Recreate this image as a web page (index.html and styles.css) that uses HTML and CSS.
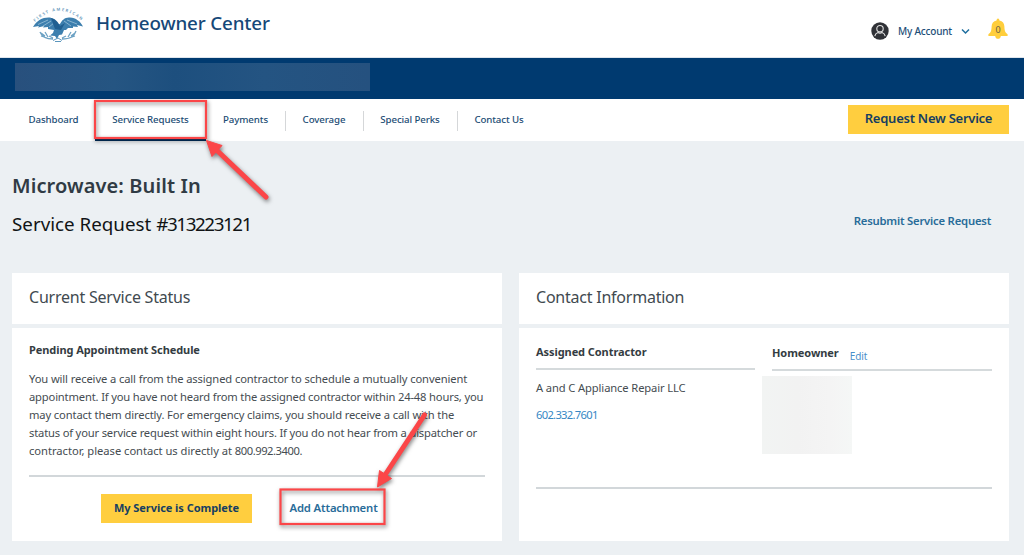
FILE: index.html
```html
<!DOCTYPE html>
<html lang="en">
<head>
<meta charset="utf-8">
<title>Homeowner Center</title>
<link rel="stylesheet" href="styles.css">
</head>
<body>
<header class="top">
  <svg class="logo" width="54" height="38" viewBox="0 0 54 38" aria-label="First American">
    <defs><path id="arc" d="M4 16Q27-6 51 15"/></defs>
    <text class="logo-text"><textPath href="#arc" textLength="52">FIRST AMERICAN</textPath></text>
    <path d="M2 21C6 14 12 11 19 11.500C23 12.500 25 15 26.500 18.500L29 18C31 14 34 11 39 11.500C45 12 49 15 52 20.500L46 19L47 21L42 20.500L42 22L37 22L35 24L33 24L31 28.500L28 29L26 33L24 30L19 29.500L22 27L23 24L17 23L17 21L12 21.500L13 20L7 21.500L8 20Z" fill="#3d7fae"/>
    <path d="M7 18.500L17 14M12 20L20 15M18 21L23 17M46 18L36 14M40 20L33 15" stroke="#a9cbdf" stroke-width=".7" fill="none"/>
    <path d="M20 12C25 13 27 16 29 20L34 17L30 24L24 23Z" fill="#205f91"/>
    <path d="M9 26C11 31 15 33 22 33M45 25C43 31 39 33 31 33M10 27l4 3M14 26l3 5M10 30l6 2M44 27l-4 3M40 26l-3 5M44 30l-6 2M18 30l4 2M35 30l-4 2" fill="none" stroke="#6da2c4" stroke-width="1.300"/>
    <path d="M22 34.500L27 32L31 34.500M24 35.500h6" fill="none" stroke="#5b96bd" stroke-width="1"/>
  </svg>
  <div class="brand">Homeowner Center</div>
  <div class="account">
    <svg width="18" height="18" viewBox="0 0 18 18"><circle cx="9" cy="9" r="8.700" fill="#303237"/><circle cx="9" cy="6.700" r="3.200" fill="none" stroke="#e4e4e4" stroke-width="1.100"/><path d="M3.800 14.200C4.300 11.800 5.500 10.900 7 10.500C8.300 11.300 9.700 11.300 11 10.500C12.500 10.900 13.700 11.800 14.200 14.200" fill="none" stroke="#e4e4e4" stroke-width="1.100"/></svg>
    <span class="account-name">My Account</span>
    <svg class="chev" width="9" height="7" viewBox="0 0 9 7"><path d="M1 1.500L4.500 5L8 1.500" fill="none" stroke="#1f6f9f" stroke-width="1.500"/></svg>
  </div>
  <div class="bell">
    <svg width="20" height="22" viewBox="0 0 20 22"><path d="M10 .5C11 .5 11.400 1.500 11.400 2.500C14.800 3.100 16.200 5.200 16.400 8.500C16.500 13 17.300 14.500 19.600 16.200V18H.4V16.200C2.700 14.500 3.500 13 3.600 8.500C3.800 5.200 5.200 3.100 8.600 2.500C8.600 1.500 9 .5 10 .5Z" fill="#ffce3c"/><path d="M7.200 18h5.600C12.500 21.800 7.500 21.800 7.200 18Z" fill="#ffce3c"/></svg>
    <span class="count">0</span>
  </div>
</header>
<div class="bar"><div class="redacted"></div></div>
<nav class="nav">
  <a class="n1">Dashboard</a><a class="n2">Service Requests</a><a class="n3">Payments</a><a class="n4">Coverage</a><a class="n5">Special Perks</a><a class="n6">Contact Us</a>
  <button class="request">Request New Service</button>
</nav>
<main>
  <div class="heading">
    <div>
      <h1>Microwave: Built In</h1>
      <p class="number">Service Request <span class="digits">#313223121</span></p>
    </div>
    <a class="resubmit">Resubmit Service Request</a>
  </div>
  <div class="cards">
    <section class="card">
      <h2>Current Service Status</h2>
      <div class="body">
        <h3 class="pending">Pending Appointment Schedule</h3>
        <p class="copy"><span class="c1">You will receive a call from the assigned contractor to schedule a mutually convenient</span><br><span class="c2">appointment. If you have not heard from the assigned contractor within 24-48 hours, you</span><br><span class="c3">may contact them directly. For emergency claims, you should receive a call with the</span><br><span class="c4">status of your service request within eight hours. If you do not hear from a dispatcher or</span><br><span class="c5">contractor, please contact us directly at </span><span class="tel">800.992.3400.</span></p>
        <div class="actions">
          <button class="complete">My Service is Complete</button>
          <a class="attach">Add Attachment</a>
        </div>
      </div>
    </section>
    <section class="card">
      <h2>Contact Information</h2>
      <div class="body">
        <div class="contacts">
          <div class="contractor">
            <h3>Assigned Contractor</h3>
            <p class="company">A and C Appliance Repair LLC</p>
            <p class="phone">602.332.7601</p>
          </div>
          <div class="owner">
            <h3>Homeowner<a class="edit">Edit</a></h3>
            <div class="masked"></div>
          </div>
        </div>
      </div>
    </section>
  </div>
</main>
<svg class="marks" width="1024" height="555" viewBox="0 0 1024 555">
  <g class="mark">
    <rect x="95" y="101" width="111" height="37"/>
    <path d="M266 197L216 149.500" class="shaft"/><path d="M206.500 140.500L222 145.500L212 156.500Z" class="tip"/>
    <rect x="280.500" y="489.500" width="104" height="34.500"/>
    <path d="M424.500 415L385 475" class="shaft"/><path d="M377.500 487L379.500 470.500L391.500 478.500Z" class="tip"/>
  </g>
</svg>
</body>
</html>
```
FILE: styles.css
```css
* { box-sizing: border-box; margin: 0; padding: 0; }
body { width: 1024px; height: 555px; overflow: hidden; position: relative; background: #ecf0f3; font-family: "Noto Sans", "Open Sans", sans-serif; color: #454c51; white-space: nowrap; }
button { border: 0; background: #ffce3f; font-family: inherit; color: #163e62; font-weight: 600; white-space: nowrap; }
.top { height: 58px; background: #fff; border-bottom: 1px solid #dfe5ec; display: flex; }
.logo { margin: 6px 0 0 31px; }
.logo-text { font-size: 4px; font-weight: 600; fill: #5c92b8; }
.brand { margin-left: 11px; width: 175px; font-size: 18.8px; line-height: 28px; padding-top: 9px; color: #164878; letter-spacing: -.15px; font-weight: 500; }
.account { margin-left: 600px; padding-top: 22px; display: flex; align-items: flex-start; }
.account-name { width: 54px; margin-left: 9px; font-size: 10px; letter-spacing: -.2px; line-height: 18px; color: #1e4f78; font-weight: 500; }
.chev { margin: 6px 0 0 9px; }
.bell { position: relative; margin: 18px 0 0 18px; width: 20px; height: 22px; }
.count { position: absolute; inset: 0; text-align: center; font-size: 9px; line-height: 23px; color: #666044; }
.bar { height: 41px; background: #003a70; padding: 5px 15px; }
.redacted { width: 355px; height: 28px; background: linear-gradient(90deg, #28507d, #255582 28%, #1d4f7e 45%, #245482 70%, #25517f); }
.nav { height: 42px; background: #fff; display: flex; padding-left: 12px; }
.nav a { position: relative; font-size: 9.7px; letter-spacing: -.1px; line-height: 42px; text-align: center; color: #1b4c74; font-weight: 500; }
.n1 { width: 83px; } .n2 { width: 111px; border-bottom: 3px solid #002f5d; } .n3 { width: 79px; } .n4 { width: 78px; } .n5 { width: 94px; } .n6 { width: 84px; }
.n3::after, .n4::after, .n5::after { content: ""; position: absolute; right: -1px; top: 12px; height: 20px; width: 1px; background: #d5d7d9; }
.request { margin: 6px 0 0 307px; width: 161px; height: 29px; font-size: 13px; letter-spacing: -.25px; line-height: 27px; padding-bottom: 2px; }
.heading { height: 132px; padding: 31px 33px 0 12px; display: flex; justify-content: space-between; }
h1 { font-size: 20px; line-height: 28px; font-weight: 600; letter-spacing: .1px; color: #303b44; }
.number { margin-top: 10px; font-size: 18.8px; line-height: 28px; letter-spacing: 0; color: #111416; }
.digits { letter-spacing: -1.4px; }
.resubmit { font-size: 11.3px; line-height: 16px; font-weight: 600; letter-spacing: -.22px; color: #286c99; margin-top: 41px; }
.cards { display: grid; grid-template-columns: 490px 490px; gap: 17px; padding-left: 12px; }
h2 { height: 51px; background: #fff; padding: 0 17px; font-size: 16px; line-height: 49px; font-weight: 400; letter-spacing: -.23px; color: #414a50; }
.body { margin-top: 4px; height: 213px; background: #fff; padding: 13px 17px; }
h3 { font-size: 11px; line-height: 18px; font-weight: 700; letter-spacing: -.07px; color: #343c42; }
.copy { margin-top: 11px; height: 107px; border-bottom: 2px solid #d2d7da; font-size: 11.2px; line-height: 18px; }
.c1 { letter-spacing: -.115px; }
.c2 { letter-spacing: -.165px; }
.c3 { letter-spacing: -.13px; }
.c4 { letter-spacing: -.18px; }
.c5 { letter-spacing: -.03px; }
.tel { letter-spacing: -.45px; }
.actions { display: flex; padding: 17px 0 0 72px; }
.complete { width: 151px; height: 29px; font-size: 11px; letter-spacing: -.05px; font-weight: 700; padding-bottom: 2px; }
.attach { margin-left: 37.5px; font-size: 11.3px; line-height: 27px; font-weight: 600; letter-spacing: -.15px; color: #286c99; }
.contacts { height: 148px; border-bottom: 2px solid #d2d7da; display: grid; grid-template-columns: 219px 220px; gap: 17px; }
.contractor h3 { height: 29px; padding-top: 2px; border-bottom: 2px solid #d5dadc; }
.company { font-size: 11.2px; line-height: 18px; margin-top: 9px; letter-spacing: -.12px; }
.phone { font-size: 11.2px; line-height: 18px; margin-top: 9px; letter-spacing: -.7px; color: #3587c4; }
.owner h3 { height: 30px; padding-top: 3px; border-bottom: 2px solid #d5dadc; display: flex; }
.edit { margin-left: 11px; padding-top: 3px; font-size: 10px; font-weight: 400; color: #4a8fca; }
.masked { width: 90px; height: 78px; margin: 5px 0 0 -10px; background: linear-gradient(90deg, #f2f4f3, #f2f2f2 40%, #f4f4f4 75%, #f5f7f6); }
.marks { position: absolute; left: 0; top: 0; pointer-events: none; }
.mark { fill: none; stroke: #fb4648; stroke-width: 2.2; filter: drop-shadow(1px 2px 2px rgba(0,0,0,.5)); }
.mark .shaft { stroke-width: 5; stroke-linecap: round; }
.mark .tip { fill: #fb4648; stroke-width: 1; stroke-linejoin: round; }
```
